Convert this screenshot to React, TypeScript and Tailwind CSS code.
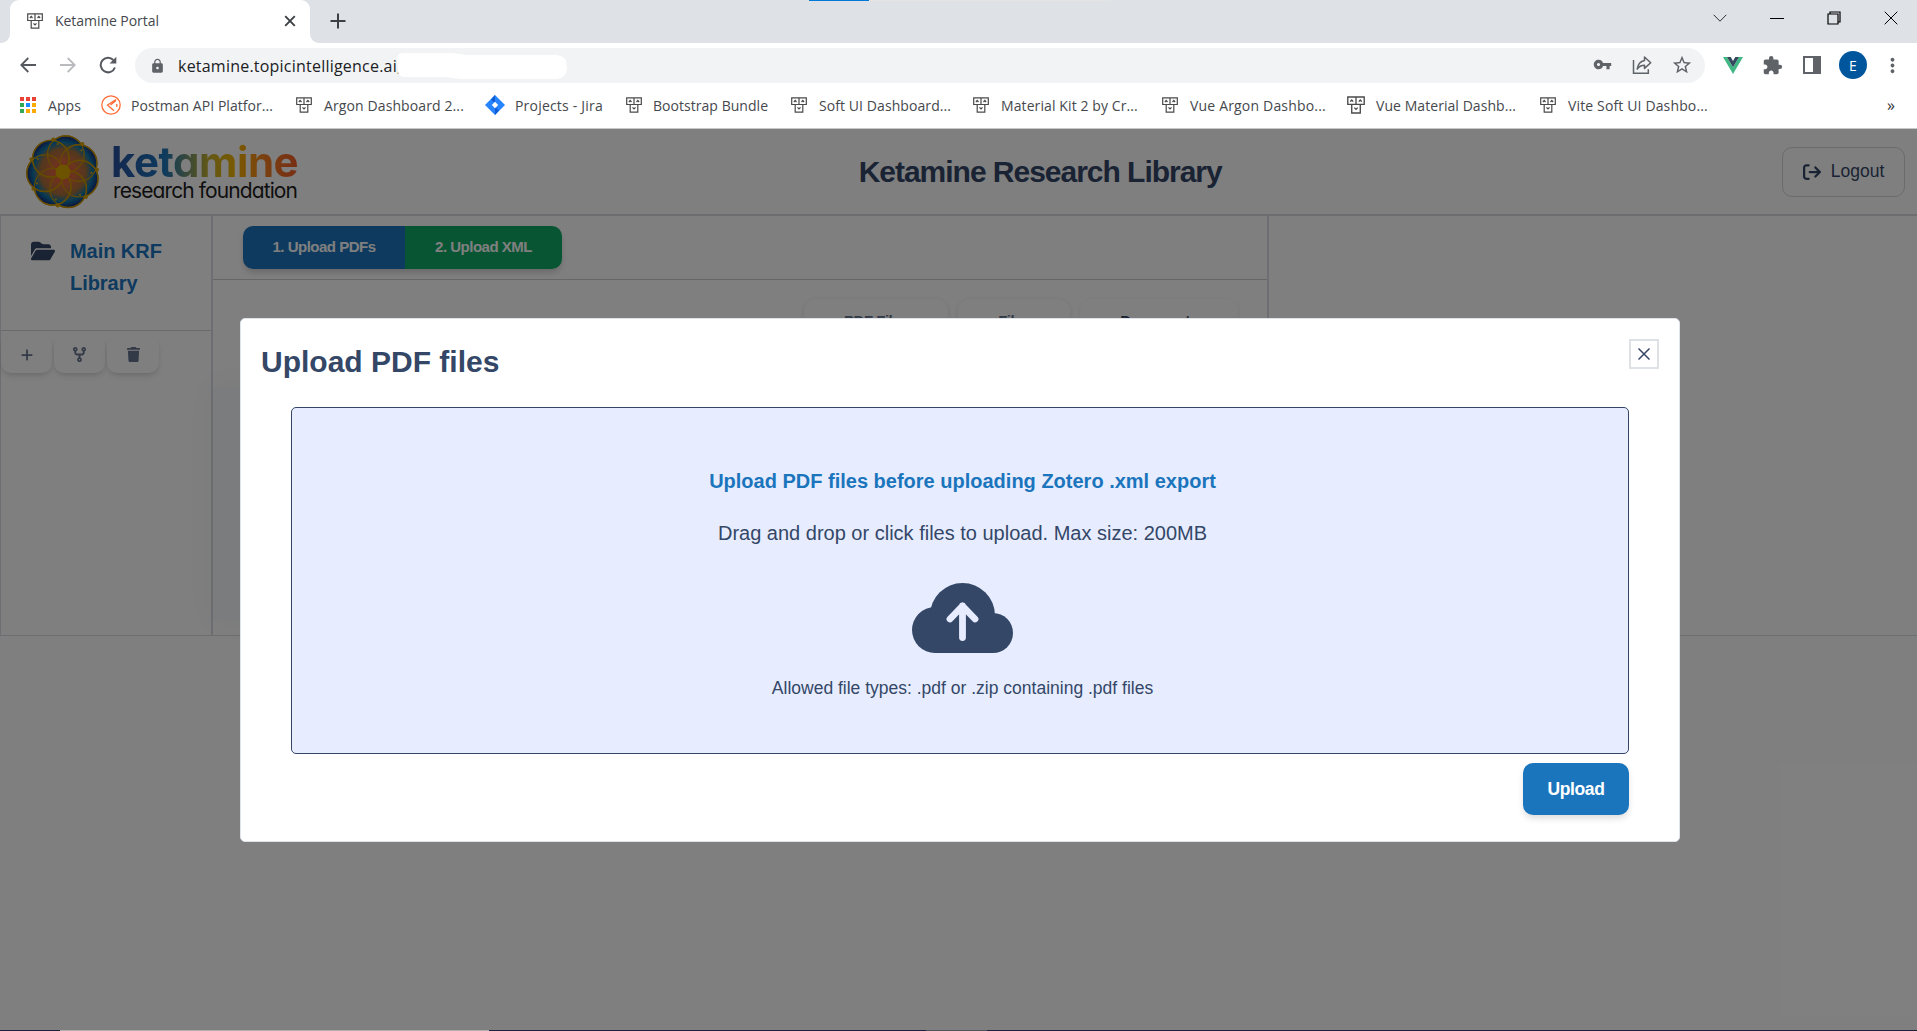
import type { ReactNode } from "react";
import { MdExtension, MdLock, MdMoreVert, MdStarBorder, MdVpnKey } from "react-icons/md";
import { FaArrowRightFromBracket, FaCodeFork, FaFolderOpen, FaPlus, FaTrash } from "react-icons/fa6";

function BotIcon({ className = "h-4 w-4" }: { className?: string }) {
  return (
    <svg viewBox="0 0 16 16" className={className} fill="none" stroke="#4a4a4a" strokeWidth="1.2">
      <path d="M.7.9h14.6v6.6H.7zM8 .9v6.6M4.2 7.5v7.6h7.6V7.5" />
      <path d="M2.9 5l1.3-1.5L5.5 5M10.5 5l1.3-1.5L13.1 5M6.5 10.3L8 11.9l1.5-1.6" />
    </svg>
  );
}

const appColors = [
  "bg-[#ea4335]", "bg-[#ea4335]", "bg-[#ea4335]",
  "bg-[#34a853]", "bg-[#1a8cff]", "bg-[#fbab04]",
  "bg-[#34a853]", "bg-[#fbab04]", "bg-[#fbab04]",
];

function AppsIcon() {
  return (
    <div className="grid grid-cols-3 gap-[2px]">
      {appColors.map((c, i) => (
        <span key={i} className={`h-[4px] w-[4px] ${c}`} />
      ))}
    </div>
  );
}

function PostmanIcon() {
  return (
    <svg viewBox="0 0 20 20" className="h-5 w-5" fill="none" stroke="#ff6c37" strokeWidth="1.3">
      <circle cx="10" cy="10" r="9.2" />
      <path d="M15 4.500L6.500 10l6.500 5.800M9.500 10L15 5.500M15.800 9v3" />
    </svg>
  );
}

function JiraIcon() {
  return (
    <svg viewBox="0 0 20 20" className="h-5 w-5">
      <path d="M10 0l10 10-10 10L0 10z" fill="#2684ff" />
      <path d="M10 0L6 4.500 10 8M10 20l4-4.500L10 12" fill="#0f5bd3" />
      <path d="M10 6.800l3.200 3.200-3.200 3.200L6.800 10z" fill="#fff" />
    </svg>
  );
}

type Bookmark = { label: string; icon: ReactNode; box: string; text: string };

const bookmarks: Bookmark[] = [
  { label: "Apps", icon: <AppsIcon />, box: "w-[81px]", text: "ml-[12px] tracking-[0.08px]" },
  { label: "Postman API Platfor...", icon: <PostmanIcon />, box: "w-[195px]", text: "ml-[10px] tracking-[0.05px]" },
  { label: "Argon Dashboard 2...", icon: <BotIcon />, box: "w-[189px]", text: "ml-3 tracking-[0.11px]" },
  { label: "Projects - Jira", icon: <JiraIcon />, box: "w-[141px]", text: "ml-[10px] tracking-[0.2px]" },
  { label: "Bootstrap Bundle", icon: <BotIcon />, box: "w-[165px]", text: "ml-[11px] tracking-[0.04px]" },
  { label: "Soft UI Dashboard...", icon: <BotIcon />, box: "w-[182px]", text: "ml-3 tracking-[0.08px]" },
  { label: "Material Kit 2 by Cr...", icon: <BotIcon />, box: "w-[189px]", text: "ml-3 tracking-[0.1px]" },
  { label: "Vue Argon Dashbo...", icon: <BotIcon />, box: "w-[185px]", text: "ml-3 tracking-[0.18px]" },
  { label: "Vue Material Dashb...", icon: <BotIcon className="h-[18px] w-[18px]" />, box: "w-[193px]", text: "ml-[11px] tracking-[0.06px]" },
  { label: "Vite Soft UI Dashbo...", icon: <BotIcon />, box: "w-[180px]", text: "ml-3 tracking-[0.14px]" },
];

function TabStrip() {
  return (
    <div className="relative flex h-[43px] bg-[#dee1e6]">
      <div className="absolute left-[809px] top-0 flex h-[1px] w-[300px] bg-[#e4e4e4]">
        <span className="h-full w-[60px] bg-[#0078d7]" />
      </div>
      <div className="flex w-[10px] items-end bg-white">
        <div className="h-full w-full rounded-br-[9px] bg-[#dee1e6]" />
      </div>
      <div className="w-[300px] bg-[#dee1e6]">
        <div className="flex h-full items-center rounded-t-[9px] bg-white pb-[2px] pl-[17px] pr-[14px]">
          <BotIcon />
          <span className="ml-3 flex-1 text-[14px] tracking-[-0.05px] text-[#45484d]">Ketamine Portal</span>
          <svg viewBox="0 0 12 12" className="h-3 w-3" stroke="#3c4043" strokeWidth="1.9">
            <path d="M1.200 1.200l9.600 9.600M10.800 1.200L1.200 10.800" />
          </svg>
        </div>
      </div>
      <div className="flex flex-1 bg-white">
        <div className="flex h-full flex-1 items-center rounded-bl-[9px] bg-[#dee1e6] pb-[1px] pl-[20px]">
          <svg viewBox="0 0 16 16" className="h-4 w-4" stroke="#3c4043" strokeWidth="2">
            <path d="M8 .5v15M.5 8h15" />
          </svg>
          <div className="mb-[6px] ml-auto mr-[19px] flex items-center gap-[43px]">
            <svg viewBox="0 0 14 14" className="h-[14px] w-[14px]" fill="none" stroke="#333">
              <path d="M.7 3.800L7 10.200l6.300-6.400" />
            </svg>
            <svg viewBox="0 0 14 14" className="h-[14px] w-[14px]" fill="none" stroke="#000">
              <path d="M0 7.500h14" />
            </svg>
            <svg viewBox="0 0 14 14" className="h-[14px] w-[14px]" fill="none" stroke="#000" strokeWidth="1.200">
              <path d="M1 3h10v10H1zM3 3V1h10v10h-2" />
            </svg>
            <svg viewBox="0 0 14 14" className="h-[14px] w-[14px]" fill="none" stroke="#000">
              <path d="M.7.7l12.600 12.600M13.300.7L.7 13.300" />
            </svg>
          </div>
        </div>
      </div>
    </div>
  );
}

function Toolbar() {
  return (
    <div className="flex h-[45px] items-center bg-white">
      <svg viewBox="0 0 16 16" className="mb-[2px] ml-[20px] h-4 w-4" fill="none" stroke="#55595e" strokeWidth="1.800">
        <path d="M16 8H1.500M8.300 1L1.300 8l7 7" />
      </svg>
      <svg viewBox="0 0 16 16" className="mb-[2px] ml-6 h-4 w-4" fill="none" stroke="#b9bbbe" strokeWidth="1.800">
        <path d="M0 8h14.500M7.700 1l7 7-7 7" />
      </svg>
      <svg viewBox="0 0 18 18" className="mb-[2px] ml-[23px] h-[18px] w-[18px]" fill="none" stroke="#55595e" strokeWidth="2">
        <path d="M15.900 11.500A7.300 7.300 0 1 1 14.300 4" />
        <path d="M17.300.8v6.700h-6.700z" fill="#55595e" stroke="none" />
      </svg>
      <div className="ml-[18px] flex h-[35px] w-[1570px] items-center rounded-full bg-[#f1f3f4] pl-[14px]">
        <MdLock className="h-[16px] w-[17px] text-[#5f6368]" />
        <span className="ml-[12px] whitespace-nowrap text-[16px] tracking-[0.22px] text-[#202124]">
          ketamine.topicintelligence.ai,
        </span>
        <svg viewBox="0 0 172 28" className="-ml-[6px] h-[28px] w-[172px]">
          <path d="M8 1H52C64 1 66 3 74 3H162Q172 4 172 15T161 27H70C58 27 58 25 46 25H12Q3 25 3 20T2 8Q2 1 8 1z" fill="#fff" />
        </svg>
        <div className="mb-[2px] ml-auto mr-[12px] flex items-center text-[#5f6368]">
          <MdVpnKey className="h-[19px] w-[19px]" />
          <svg viewBox="0 0 20 20" className="ml-[20px] h-5 w-5" fill="none" stroke="#5f6368" strokeWidth="1.500">
            <path d="M1.500 5v13.200h14.800v-4" />
            <path d="M12.500 2l6.200 5.700-6.200 5.700v-3.200c-3.400 0-5.600 1.200-7.300 3.900.6-4.700 3.100-7.900 7.300-8.700z" strokeLinejoin="round" />
          </svg>
          <MdStarBorder className="ml-[19px] h-[22px] w-[22px]" />
        </div>
      </div>
      <div className="mb-[1px] flex items-center">
        <svg viewBox="0 0 20 17" className="ml-[18px] h-[17px] w-5">
          <path d="M0 0h4l6 10.300L16 0h4L10 17z" fill="#41b883" />
          <path d="M4 0h3.700L10 4l2.300-4H16l-6 10.300z" fill="#35495e" />
        </svg>
        <MdExtension className="ml-[19px] h-[21px] w-[21px] text-[#5f6368]" />
        <svg viewBox="0 0 18 18" className="ml-[20px] h-[18px] w-[18px]" fill="none" stroke="#5f6368" strokeWidth="2">
          <path d="M1 1h16v16H1z" />
          <path d="M11 1h6v16h-6z" fill="#5f6368" />
        </svg>
        <div className="ml-[18px] flex h-7 w-7 items-center justify-center rounded-full bg-[#00569c] text-[14px] text-white">E</div>
        <MdMoreVert className="ml-[14px] h-[23px] w-[23px] text-[#5f6368]" />
      </div>
    </div>
  );
}

function BookmarksBar() {
  return (
    <div className="flex h-[41px] items-center border-b border-[#c6c8ca] bg-white pb-[6px] pl-5 text-[14px] text-[#45484d]">
      {bookmarks.map((b) => (
        <div key={b.label} className={`flex shrink-0 items-center ${b.box}`}>
          {b.icon}
          <span className={`whitespace-nowrap ${b.text}`}>{b.label}</span>
        </div>
      ))}
      <span className="ml-auto mr-[22px] text-[16px] leading-none text-[#333]">»</span>
    </div>
  );
}

const petals = [0, 1, 2, 3, 4, 5, 6].map((i) => {
  const lobe = ((9 + (i * 360) / 7) * Math.PI) / 180;
  const node = lobe + Math.PI / 7;
  return {
    cx: Math.sin(lobe) * 18,
    cy: -Math.cos(lobe) * 18,
    nx: Math.sin(node) * 34,
    ny: -Math.cos(node) * 34,
    sx: Math.sin(node + 0.1) * 28.5,
    sy: -Math.cos(node + 0.1) * 28.5,
  };
});

function FlowerLogo() {
  return (
    <svg viewBox="-38 -38 76 76" className="h-[76px] w-[76px]">
      <defs>
        <radialGradient id="flower" gradientUnits="userSpaceOnUse" cx="0" cy="0" r="37">
          <stop offset="0" stopColor="#e8503a" />
          <stop offset=".32" stopColor="#d8683c" />
          <stop offset=".62" stopColor="#a4703c" />
          <stop offset=".8" stopColor="#0f75a8" />
          <stop offset="1" stopColor="#1c1c70" />
        </radialGradient>
      </defs>
      {petals.map((p, i) => (
        <circle key={i} cx={p.cx} cy={p.cy} r="18.300" fill="url(#flower)" stroke="#c99700" strokeWidth="1.400" />
      ))}
      {petals.map((p, i) => (
        <circle key={i} cx={p.cx} cy={p.cy} r="18.300" fill="none" stroke="#c99700" strokeWidth="1.100" />
      ))}
      {petals.map((p, i) => (
        <g key={i} fill="#d8a200">
          <circle cx={p.nx} cy={p.ny} r="2" />
          <circle cx={p.sx} cy={p.sy} r="1.100" />
        </g>
      ))}
      <circle r="7.500" fill="#dba400" />
    </svg>
  );
}

function Brand() {
  return (
    <div className="flex items-center">
      <FlowerLogo />
      <div className="ml-3 flex flex-col font-[Inter,sans-serif] [font-feature-settings:'cv11']">
        <span className="-ml-[2px] w-[190px] bg-[linear-gradient(90deg,#2a4f9e_0%,#1b75bc_28%,#c9b02a_52%,#f5b400_66%,#f58220_80%,#f1592a_100%)] bg-clip-text pt-[3px] text-[42px] leading-[36px] font-bold tracking-[-0.45px] text-transparent">
          ketamine
        </span>
        <span className="text-[21px] leading-[22px] tracking-[-0.9px] text-[#1d1d1d]">research foundation</span>
      </div>
    </div>
  );
}

function IconButton({ children, className }: { children: ReactNode; className: string }) {
  return (
    <button className={`flex h-[37px] items-center justify-center rounded-[10px] bg-white text-[#67748e] shadow-[0_4px_7px_-1px_rgba(0,0,0,0.11),0_2px_4px_-1px_rgba(0,0,0,0.07)] ${className}`}>
      {children}
    </button>
  );
}

function Sidebar() {
  return (
    <aside className="flex w-[212px] shrink-0 flex-col border-r-2 border-[#dadde2]">
      <div className="flex h-[115px] border-b border-[#d3d6da] pl-[30px] pt-[19px]">
        <FaFolderOpen className="mt-[4px] h-6 w-6 text-[#344767]" />
        <span className="ml-[15px] w-[110px] text-[20px] leading-8 font-bold tracking-[-0.05px] text-[#1b75bc]">Main KRF Library</span>
      </div>
      <div className="mt-[5px] flex gap-[2px]">
        <IconButton className="w-[51px]"><FaPlus className="h-[14px] w-[14px]" /></IconButton>
        <IconButton className="w-[51px]"><FaCodeFork className="h-[15px] w-[15px]" /></IconButton>
        <IconButton className="w-[52px]"><FaTrash className="h-[15px] w-[15px]" /></IconButton>
      </div>
    </aside>
  );
}

function MainColumn() {
  return (
    <section className="w-[1056px] border-r-2 border-[#dadde2]">
      <div className="flex h-[64px] border-b border-[#c8ccd1] pl-[30px] pt-[10px]">
        <div className="flex h-[43px] overflow-hidden rounded-[10px] text-[15px] font-bold tracking-[-0.5px] text-white shadow-[0_4px_7px_-1px_rgba(0,0,0,0.2)]">
          <button className="w-[162px] bg-[#1b75bc] pb-[1px]">1. Upload PDFs</button>
          <button className="w-[157px] bg-[#0fab66] pb-[1px]">2. Upload XML</button>
        </div>
      </div>
      <div className="flex justify-end gap-[10px] pr-[29px] pt-[19px] text-[15px] font-bold tracking-[-0.5px] text-[#67748e]">
        <div className="h-[60px] w-[144px] rounded-[12px] pt-[11px] text-center shadow-[0_1px_5px_rgba(0,0,0,0.12)]">PDF Files</div>
        <div className="h-[60px] w-[112px] rounded-[12px] pt-[11px] text-center shadow-[0_1px_5px_rgba(0,0,0,0.12)]">Files</div>
        <div className="h-[60px] w-[158px] rounded-[12px] pr-[8px] pt-[11px] text-center text-[#344767] shadow-[0_1px_5px_rgba(0,0,0,0.07)]">Document</div>
      </div>
      <div className="mt-[28px] h-[233px] w-[1000px] bg-[#f7f9fb] shadow-[0_0_32px_2px_rgba(60,90,110,0.06)]" />
    </section>
  );
}

function CloudUpload() {
  return (
    <svg viewBox="0 0 101 70" className="h-[70px] w-[101px]">
      <g fill="#344767">
        <circle cx="23" cy="47" r="23" />
        <circle cx="50.500" cy="32.500" r="32.500" />
        <circle cx="81" cy="50" r="20" />
        <path d="M23 35h58v35H23z" />
      </g>
      <path d="M50.500 54.500V23M38 36l12.500-13L63 36" fill="none" stroke="#e7edff" strokeWidth="6.800" strokeLinecap="round" strokeLinejoin="round" />
    </svg>
  );
}

function UploadDialog() {
  return (
    <div className="absolute inset-0 flex items-start bg-black/50">
      <div className="ml-[240px] mt-[189px] flex h-[524px] w-[1440px] flex-col rounded-[5px] border border-[#dfe3ea] bg-white">
        <div className="flex items-start justify-between pl-5 pr-5 pt-5">
          <h2 className="text-[30px] leading-[45px] font-bold text-[#344767]">Upload PDF files</h2>
          <button className="flex h-[30px] w-[30px] items-center justify-center border-2 border-[#dee2e6]">
            <svg viewBox="0 0 12 12" className="h-3 w-3" fill="none" stroke="#344767" strokeWidth="1.500">
              <path d="M.5.5l11 11M11.500.5l-11 11" />
            </svg>
          </button>
        </div>
        <div className="ml-[50px] mt-[23px] flex h-[347px] w-[1338px] flex-col items-center rounded-[5px] border border-[#344767] bg-[#e7edff] pl-[5px] text-[#344767]">
          <p className="mt-[57px] text-[20px] leading-8 font-bold text-[#1b75bc]">Upload PDF files before uploading Zotero .xml export</p>
          <p className="mt-5 text-[20px] leading-8">Drag and drop or click files to upload. Max size: 200MB</p>
          <div className="mt-[34px]">
            <CloudUpload />
          </div>
          <p className="mt-[20px] text-[17.5px] leading-[30px]">Allowed file types: .pdf or .zip containing .pdf files</p>
        </div>
        <button className="mr-[50px] mt-[9px] h-[52px] w-[106px] self-end rounded-[10px] bg-[#1b75bc] text-[17.5px] font-bold tracking-[-0.4px] text-white shadow-[0_4px_7px_-1px_rgba(0,0,0,0.15)]">
          Upload
        </button>
      </div>
    </div>
  );
}

export default function App() {
  return (
    <div className="flex h-[1031px] w-[1917px] flex-col overflow-hidden bg-white font-['Liberation_Sans',Arial,sans-serif]">
      <div className="font-['Open_Sans',sans-serif]">
        <TabStrip />
        <Toolbar />
        <BookmarksBar />
      </div>
      <div className="relative flex h-[901px] flex-col">
        <header className="grid h-[87px] shrink-0 grid-cols-3 items-center border-b-2 border-[#dadae0] pl-[25px] pr-[12px]">
          <Brand />
          <h1 className="whitespace-nowrap pl-[207px] text-[30px] font-bold tracking-[-1.02px] text-[#344767]">Ketamine Research Library</h1>
          <button className="flex h-[50px] w-[123px] items-center justify-center justify-self-end rounded-[10px] border border-[#d2d6da] text-[17.5px] text-[#344767]">
            <FaArrowRightFromBracket className="mr-[10px] h-[18px] w-[18px]" />
            Logout
          </button>
        </header>
        <div className="flex h-[420px] border-b border-l border-[#dadde2]">
          <Sidebar />
          <MainColumn />
        </div>
        <UploadDialog />
      </div>
      <div className="flex h-[1px] shrink-0 bg-[#20213a]">
        <span className="ml-[60px] w-[429px] bg-[#b5adad]" />
        <span className="ml-[437px] w-[61px] bg-[#50545a]" />
      </div>
    </div>
  );
}
